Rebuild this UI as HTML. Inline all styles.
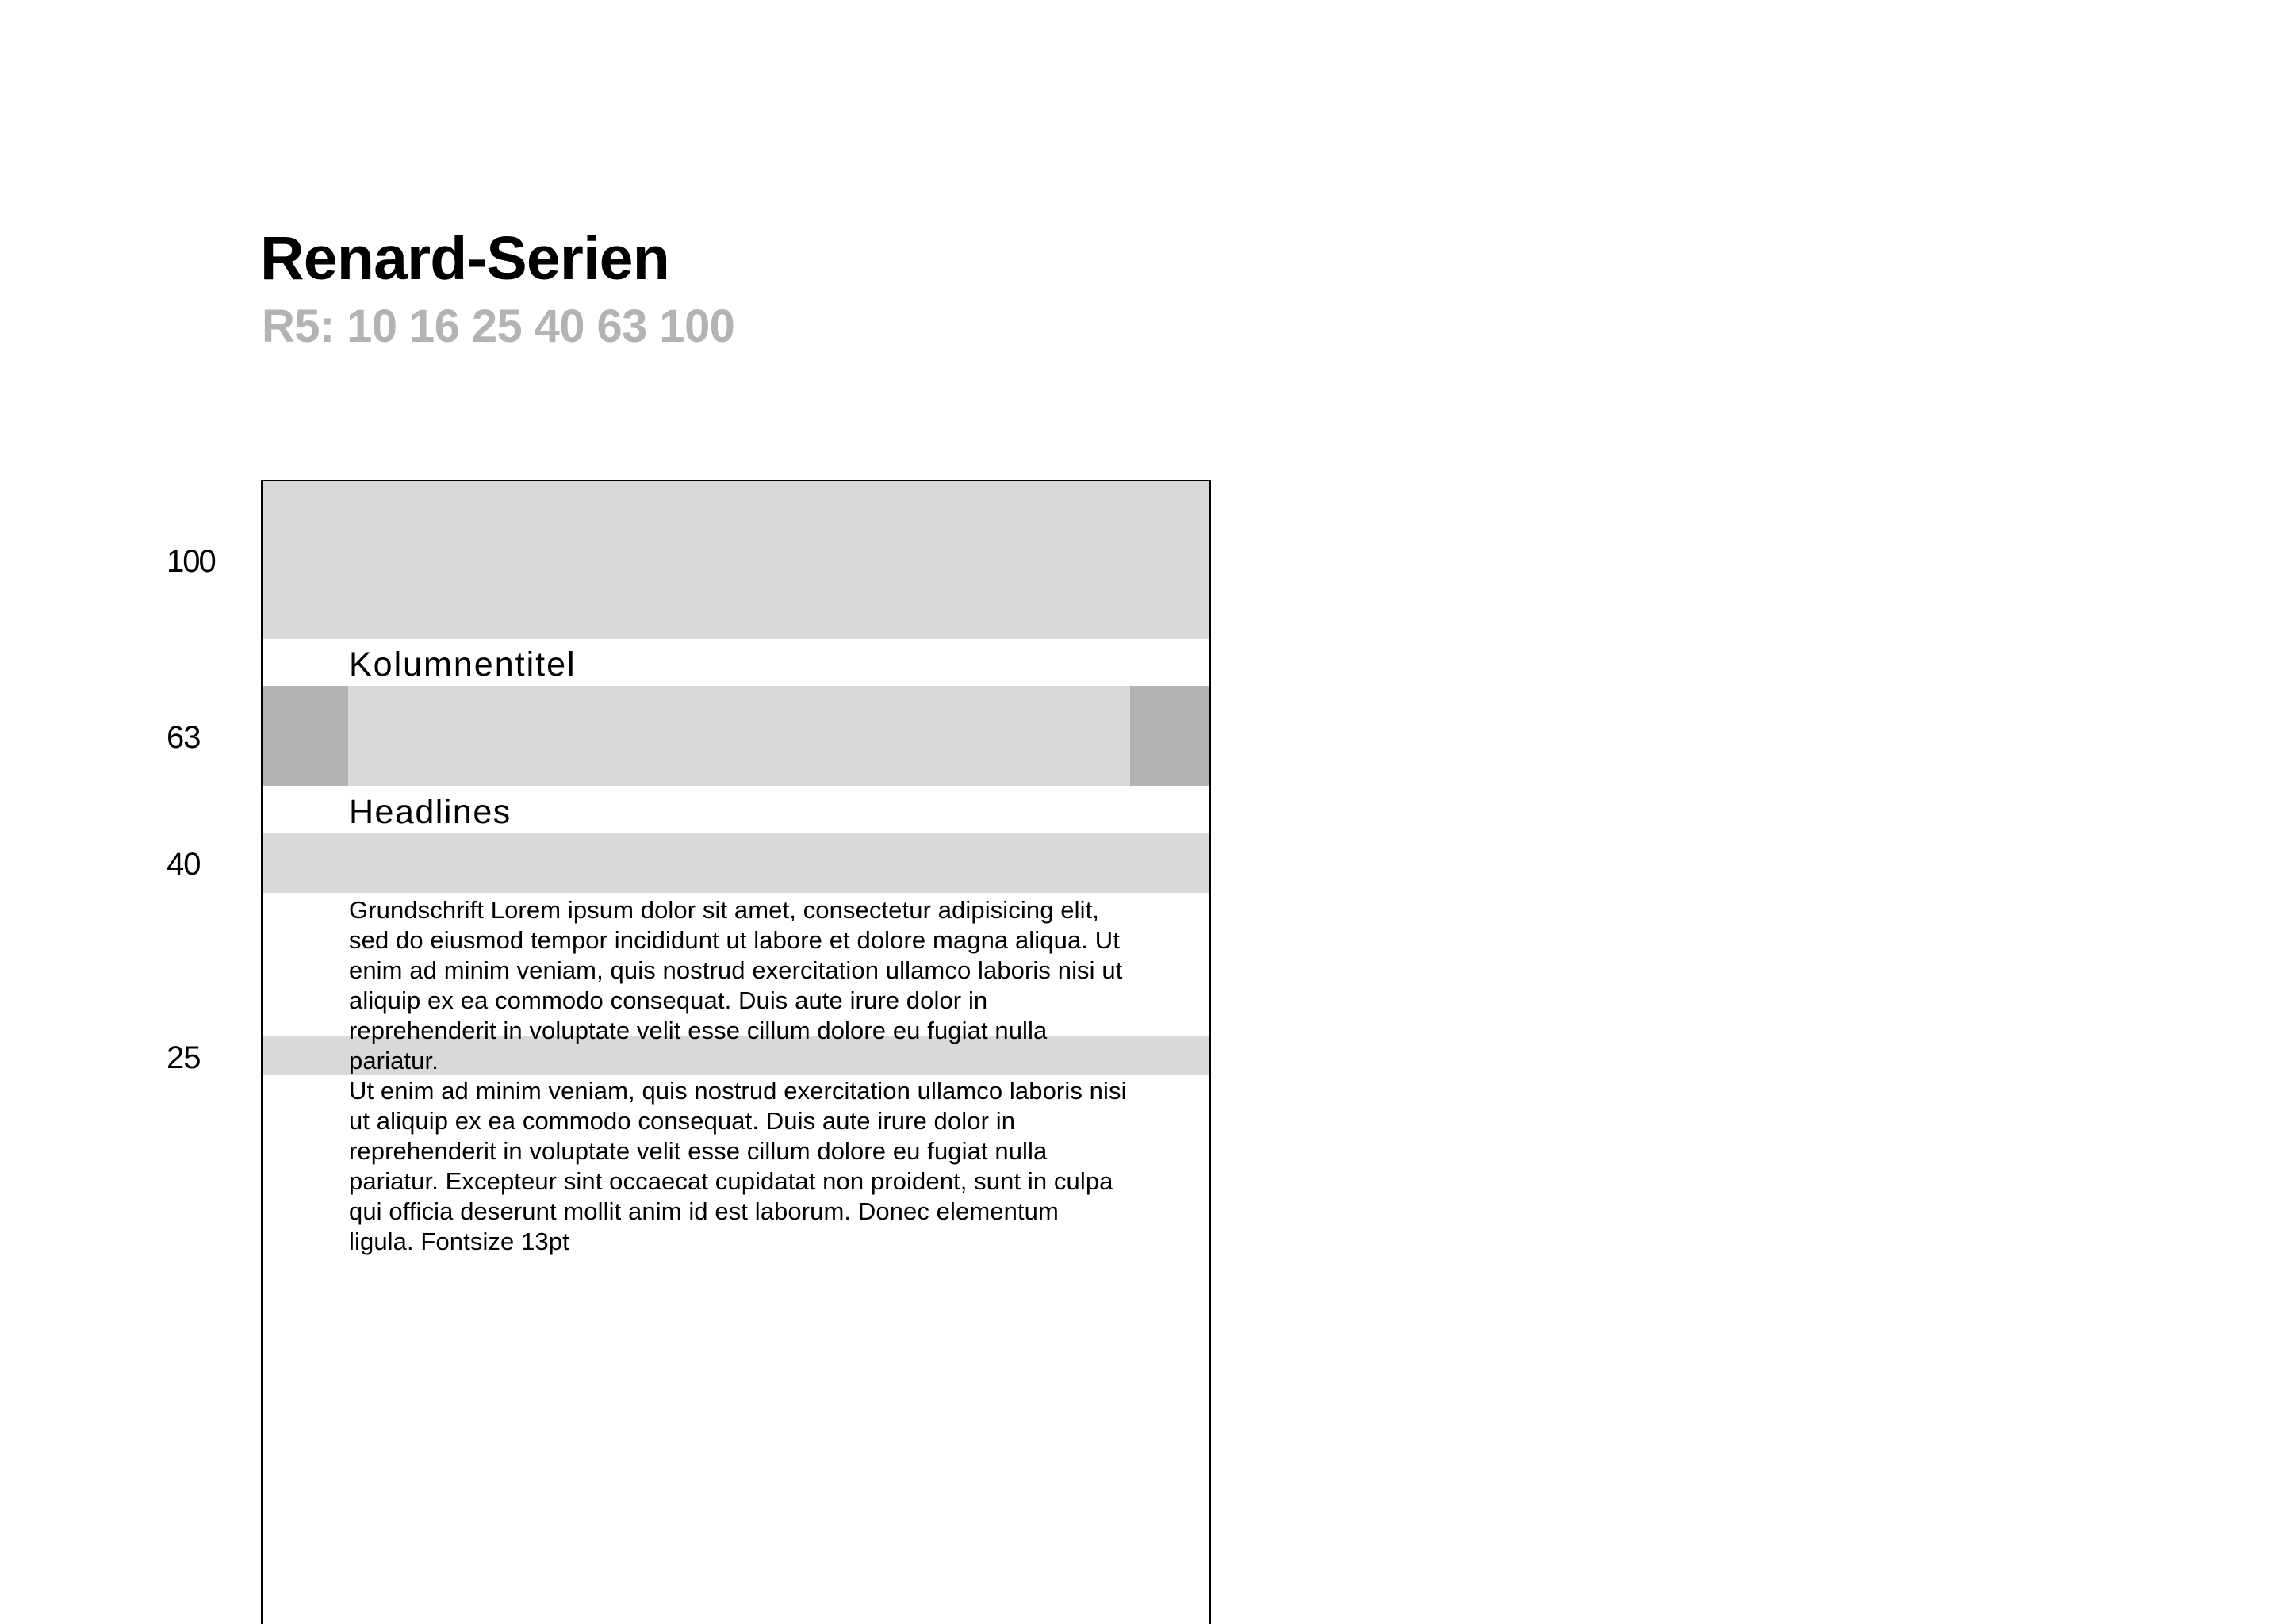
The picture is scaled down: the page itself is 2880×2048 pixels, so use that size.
<!DOCTYPE html>
<html><head><meta charset="utf-8"><style>
html,body{margin:0;padding:0;background:#fff;width:2880px;height:2048px;overflow:hidden;}
body{position:relative;font-family:"Liberation Sans",sans-serif;color:#000;}
.a{position:absolute;white-space:nowrap;}
.box{position:absolute;left:329px;top:605px;width:1194px;height:1500px;border:2px solid #000;}
.g{position:absolute;left:331px;width:1194px;background:#d9d9d9;}
.d{position:absolute;background:#b2b2b2;}
.body{position:absolute;left:440px;top:1129px;font-size:31px;line-height:38px;letter-spacing:0.1px;white-space:nowrap;}
</style></head><body>
<div class="a" style="left:328px;top:288px;font-size:77px;line-height:76px;font-weight:bold;letter-spacing:-0.8px;">Renard-Serien</div>
<div class="a" style="left:330px;top:383px;font-size:58px;line-height:58px;font-weight:bold;color:#b3b3b3;letter-spacing:-0.6px;">R5: 10 16 25 40 63 100</div>

<div class="box"></div>
<div class="g" style="top:607px;height:199px;"></div>
<div class="g" style="top:865px;height:126px;"></div>
<div class="d" style="left:331px;top:865px;width:108px;height:126px;"></div>
<div class="d" style="left:1425px;top:865px;width:100px;height:126px;"></div>
<div class="g" style="top:1050px;height:76px;"></div>
<div class="g" style="top:1306px;height:50px;"></div>

<div class="a" style="left:210px;top:688px;font-size:40px;line-height:40px;letter-spacing:-2px;">100</div>
<div class="a" style="left:210px;top:910px;font-size:40px;line-height:40px;letter-spacing:-1px;">63</div>
<div class="a" style="left:210px;top:1070px;font-size:40px;line-height:40px;letter-spacing:-1px;">40</div>
<div class="a" style="left:210px;top:1314px;font-size:40px;line-height:40px;letter-spacing:-1px;">25</div>

<div class="a" style="left:440px;top:817px;font-size:43px;line-height:42px;letter-spacing:2px;">Kolumnentitel</div>
<div class="a" style="left:440px;top:1003px;font-size:43px;line-height:42px;letter-spacing:1.5px;">Headlines</div>

<div class="body">Grundschrift Lorem ipsum dolor sit amet, consectetur adipisicing elit,<br>sed do eiusmod tempor incididunt ut labore et dolore magna aliqua. Ut<br>enim ad minim veniam, quis nostrud exercitation ullamco laboris nisi ut<br>aliquip ex ea commodo consequat. Duis aute irure dolor in<br>reprehenderit in voluptate velit esse cillum dolore eu fugiat nulla<br>pariatur.<br>Ut enim ad minim veniam, quis nostrud exercitation ullamco laboris nisi<br>ut aliquip ex ea commodo consequat. Duis aute irure dolor in<br>reprehenderit in voluptate velit esse cillum dolore eu fugiat nulla<br>pariatur. Excepteur sint occaecat cupidatat non proident, sunt in culpa<br>qui officia deserunt mollit anim id est laborum. Donec elementum<br>ligula. Fontsize 13pt</div>
</body></html>
